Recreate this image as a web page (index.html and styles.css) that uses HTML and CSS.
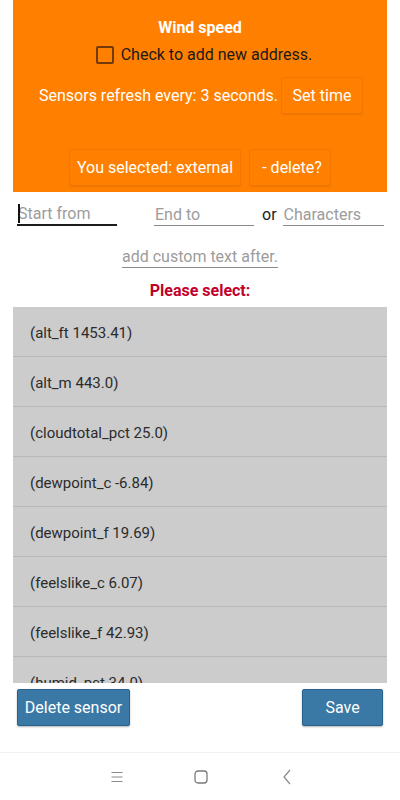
FILE: index.html
```html
<!DOCTYPE html>
<html>
<head>
<meta charset="utf-8">
<link rel="stylesheet" href="styles.css">
</head>
<body>
<div class="page">
  <div class="panel">
    <div class="title">Wind speed</div>
    <div class="check-row"><span class="checkbox"></span><span>Check to add new address.</span></div>
    <div class="refresh-row"><span>Sensors refresh every: 3 seconds.</span><button class="obtn set">Set time</button></div>
    <div class="sel-row"><button class="obtn sel">You selected: external</button><button class="obtn del">- delete?</button></div>
  </div>
  <div class="inputs-row">
    <span class="field focused"><input class="inp w100" placeholder="Start from"></span>
    <input class="inp w100 end" placeholder="End to">
    <span class="or">or</span>
    <input class="inp w101" placeholder="Characters">
  </div>
  <div class="custom-row"><input class="inp w156" placeholder="add custom text after."></div>
  <div class="please">Please select:</div>
  <div class="list">
    <div class="row">(alt_ft 1453.41)</div>
    <div class="row">(alt_m 443.0)</div>
    <div class="row">(cloudtotal_pct 25.0)</div>
    <div class="row">(dewpoint_c -6.84)</div>
    <div class="row">(dewpoint_f 19.69)</div>
    <div class="row">(feelslike_c 6.07)</div>
    <div class="row">(feelslike_f 42.93)</div>
    <div class="row">(humid_pct 34.0)</div>
  </div>
  <div class="actions">
    <button class="bbtn">Delete sensor</button>
    <button class="bbtn save">Save</button>
  </div>
  <div class="nav">
    <svg width="12" height="12" viewBox="0 0 12 12"><path d="M0.5 1.5H11.5M0.5 6H11.5M0.5 10.5H11.5" stroke="#8a8a8a" stroke-width="1" fill="none"/></svg>
    <svg width="14" height="14" viewBox="0 0 14 14"><rect x="1" y="1" width="12" height="12" rx="3" stroke="#7a7a7a" stroke-width="1.3" fill="none"/></svg>
    <svg width="8" height="16" viewBox="0 0 8 16"><path d="M7 1L1 8L7 15" stroke="#8a8a8a" stroke-width="1.2" fill="none"/></svg>
  </div>
</div>
</body>
</html>
```

FILE: styles.css
```css
* { box-sizing: border-box; }
html, body { margin: 0; padding: 0; background: #ffffff; }
body { font-family: Roboto, "Noto Sans", sans-serif; font-size: 16px; color: #222; }
.page { width: 400px; height: 800px; display: flex; flex-direction: column; overflow: hidden; }

.panel {
  margin: 0 13px;
  height: 192px;
  background: #ff8000;
  display: flex;
  flex-direction: column;
  align-items: center;
  color: #fff;
}
.title { margin-top: 18px; line-height: 20px; font-weight: 700; font-size: 16px; }
.check-row { margin-top: 6px; height: 21px; display: flex; align-items: center; color: #1a1a1a; padding-left: 8px; }
.checkbox {
  width: 18px; height: 18px;
  border: 2px solid #713a06;
  border-radius: 2px;
  margin-right: 7px;
}
.refresh-row { margin-top: 12px; display: flex; align-items: center; gap: 3px; padding-left: 2px; }
.sel-row { margin-top: 35px; display: flex; gap: 8px; }
.obtn {
  font-family: Roboto, "Noto Sans", sans-serif;
  font-size: 16px;
  color: #fff;
  background: #ff8000;
  height: 37px;
  border: 1px solid rgba(150, 60, 0, 0.12);
  border-radius: 3px;
  box-shadow: 0 1px 1px rgba(120, 50, 0, 0.15);
  padding: 0 8px;
}
.set { width: 82px; padding: 0; }
.sel { width: 172px; padding: 0; }
.del { width: 82px; padding: 0 0 0 4px; }

.inputs-row { margin-top: 8px; padding: 0 17px; display: flex; align-items: flex-end; height: 26px; }
.inp {
  font-family: Roboto, "Noto Sans", sans-serif;
  font-size: 16px;
  height: 26px;
  border: none;
  border-bottom: 1px solid #8a8a8a;
  padding: 3px 1px 0;
  outline: none;
  background: transparent;
  color: #222;
}
.inp::placeholder { color: #9c9c9c; }
.w100 { width: 100px; }
.w101 { width: 101px; }
.w156 { width: 156px; padding-left: 0; padding-right: 0; }
.field { position: relative; display: block; }
.field .inp { border-bottom: 2px solid #1c1c1c; }
.field::before {
  content: "";
  position: absolute;
  left: 1px; top: 4px;
  width: 2px; height: 19px;
  background: #111;
}
.end { margin-left: 37px; }
.or { margin: 0 6px 0 8px; line-height: 20px; color: #222; padding-bottom: 1px; }

.custom-row { margin-top: 16px; display: flex; justify-content: center; }
.please {
  margin-top: 13px;
  text-align: center;
  font-weight: 700;
  color: #c2002b;
  line-height: 20px;
}
.list {
  margin: 6px 13px 0;
  height: 376px;
  overflow: hidden;
  background: #cccccc;
}
.row {
  height: 50px;
  border-bottom: 1px solid #b8b8b8;
  padding: 3px 0 0 17px;
  display: flex;
  align-items: center;
  font-size: 15px;
  color: #2b2b2b;
}

.actions { margin-top: 6px; padding: 0 17px; display: flex; justify-content: space-between; }
.bbtn {
  font-family: Roboto, "Noto Sans", sans-serif;
  font-size: 16px;
  color: #fff;
  background: #3a78a6;
  border: 1px solid #2a628e;
  border-radius: 2px;
  height: 37px;
  width: 113px;
  padding: 0;
  box-shadow: 0 1px 2px rgba(0, 0, 0, 0.3);
}
.save { width: 81px; }

.nav {
  margin-top: 26px;
  height: 48px;
  border-top: 1px solid #f1f1f1;
  display: flex;
  align-items: center;
  justify-content: center;
  gap: 0;
  padding-left: 1px;
}
.nav svg:nth-child(1) { margin-right: 71px; }
.nav svg:nth-child(2) { margin-right: 75px; }
```
